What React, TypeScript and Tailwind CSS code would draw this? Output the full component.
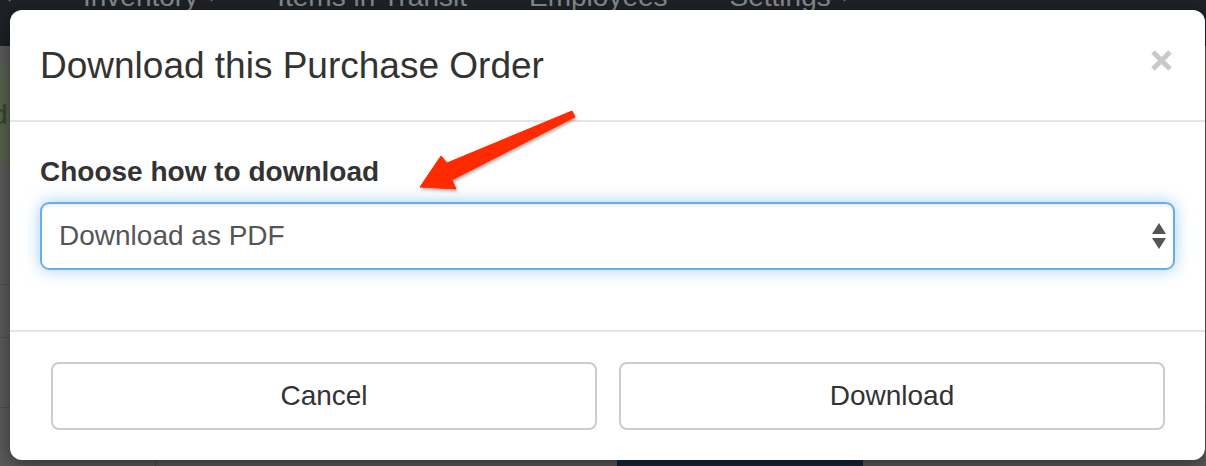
import React from "react";

const font = { fontFamily: '"Liberation Sans", Arial, Helvetica, sans-serif' };

function Background() {
  return (
    <div className="absolute inset-0 flex flex-col bg-[#5c5c5c]" style={font}>
      <div className="h-[48px] bg-[#1e2125] flex items-start text-[28px] leading-[28px] text-[#85888c] overflow-hidden">
        <div className="flex items-start mt-[-17px]">
          <span className="ml-[6px] w-[60px] text-[14px]">▾</span>
          <span className="ml-[17px]">Inventory</span>
          <span className="ml-[10px] text-[14px]">▾</span>
          <span className="ml-[62px]">Items in Transit</span>
          <span className="ml-[62px]">Employees</span>
          <span className="ml-[62px]">Settings</span>
          <span className="ml-[10px] text-[14px]">▾</span>
        </div>
      </div>
      <div className="h-[20px]" />
      <div className="h-[102px] bg-[#59624f] flex items-center overflow-hidden">
        <span className="ml-[-8px] text-[28px] text-[#2e4a29]">d</span>
      </div>
      <div className="h-[125px] border-b border-[#4f4f4f]" />
      <div className="h-[55px] border-b border-[#4f4f4f]" />
      <div className="h-[72px] border-b border-[#4f4f4f]" />
      <div className="h-[20px]" />
      <div className="flex items-start h-[40px] text-[28px] text-[#222]">
        <span className="ml-[100px] w-[55px] text-[16px]">▼</span>
        <div className="w-[395px] border-l border-[#4a4a4a] h-full flex">
          <span className="ml-[45px] leading-[30px]">Unfiltered</span>
          <span className="ml-auto mr-[8px] text-[16px]">▼</span>
        </div>
        <div className="ml-[67px] w-[246px] h-full bg-[#14283a] text-[#5b6c7c] text-center leading-[30px]">Submit</div>
      </div>
    </div>
  );
}

function Arrow() {
  return (
    <svg
      className="absolute inset-0 pointer-events-none"
      width="1206"
      height="466"
      viewBox="0 0 1206 466"
    >
      <defs>
        <filter id="sh" x="-20%" y="-20%" width="140%" height="140%">
          <feDropShadow dx="1" dy="2" stdDeviation="1.5" floodColor="#000" floodOpacity="0.3" />
        </filter>
      </defs>
      <polygon
        points="572,111 447,163 441,156 420,187 456,189 452,180 575,117"
        fill="#ff2a00"
        stroke="#ff2a00"
        strokeWidth="1"
        strokeLinejoin="round"
        filter="url(#sh)"
      />
    </svg>
  );
}

export default function App() {
  return (
    <div className="relative w-[1206px] h-[466px] overflow-hidden" style={font}>
      <Background />
      <div className="absolute left-[10px] top-[10px] w-[1195px] bg-white rounded-[12px] shadow-[0_6px_20px_rgba(0,0,0,0.45)] text-[#333]">
        <div className="flex items-start justify-between px-[30px] pt-[30px] pb-[29px] border-b-2 border-[#e5e5e5]">
          <h4 className="text-[37px] leading-[51px] font-normal">Download this Purchase Order</h4>
          <svg className="mt-[10px] mr-[3px]" width="21" height="21" viewBox="0 0 21 21">
            <path d="M2 2 L19 19 M19 2 L2 19" stroke="#c9c9c9" strokeWidth="5" />
          </svg>
        </div>
        <div className="px-[30px] pt-[30px] pb-[30px] border-b-2 border-[#e5e5e5]">
          <div className="text-[28px] leading-[40px] font-bold mb-[10px]">Choose how to download</div>
          <div className="h-[68px] border-2 border-[#66afe9] rounded-[9px] shadow-[inset_0_2px_2px_rgba(0,0,0,0.075),0_0_16px_rgba(102,175,233,0.6)] flex items-center pl-[17px] pr-[7px]">
            <span className="text-[28px] text-[#555] flex-1">Download as PDF</span>
            <svg width="14" height="26" viewBox="0 0 14 26">
              <polygon points="7,0 14,11 0,11" fill="#555" />
              <polygon points="0,15 14,15 7,26" fill="#555" />
            </svg>
          </div>
          <div className="h-[30px]" />
        </div>
        <div className="flex gap-[22px] pl-[41px] pr-[40px] pt-[30px] pb-[30px]">
          <button className="flex-1 h-[68px] border-2 border-[#cccccc] rounded-[8px] bg-white text-[28px] text-[#333]">
            Cancel
          </button>
          <button className="flex-1 h-[68px] border-2 border-[#cccccc] rounded-[8px] bg-white text-[28px] text-[#333]">
            Download
          </button>
        </div>
      </div>
      <Arrow />
    </div>
  );
}
